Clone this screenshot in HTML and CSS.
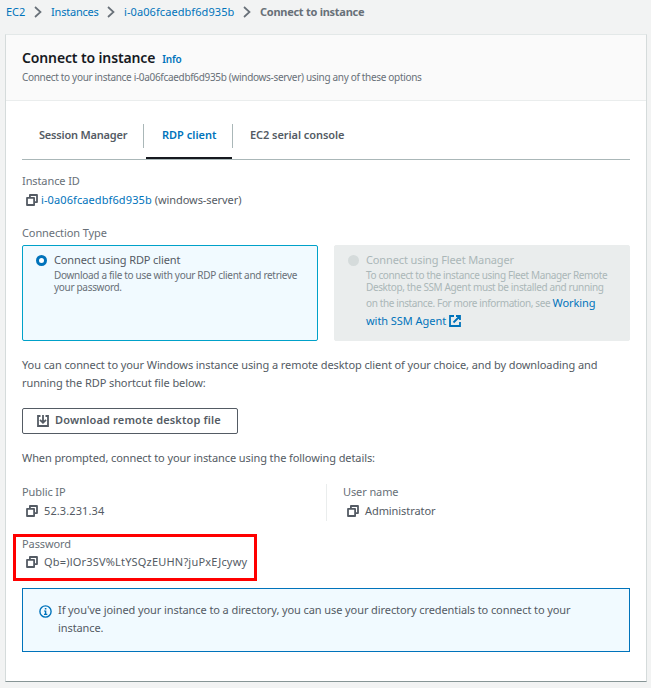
FILE: index.html
```
<!DOCTYPE html>
<html lang="en">
<head>
<meta charset="utf-8">
<title>Connect to instance</title>
<link rel="stylesheet" href="styles.css">
</head>
<body>
<svg class="defs" width="0" height="0">
  <symbol id="copy" viewBox="0 0 12 12"><path d="M3.900 3.500V1H11v7.100H8.500M1 3.900h7.100V11H1z" fill="none" stroke="currentColor" stroke-width="1.800" stroke-linejoin="round"/></symbol>
  <symbol id="chevron" viewBox="0 0 8 12"><path d="M1 1l5.5 5L1 11" fill="none" stroke="currentColor" stroke-width="1.7"/></symbol>
</svg>
<nav class="breadcrumbs">
  <a class="bc-ec2">EC2</a><svg class="chevron"><use href="#chevron"/></svg>
  <a class="bc-list">Instances</a><svg class="chevron"><use href="#chevron"/></svg>
  <a class="bc-id">i-0a06fcaedbf6d935b</a><svg class="chevron"><use href="#chevron"/></svg>
  <strong>Connect to instance</strong>
</nav>
<main class="card">
  <header class="card-header">
    <div class="title-row"><h1>Connect to instance</h1><a class="info">Info</a></div>
    <p class="subtitle">Connect to your instance i-0a06fcaedbf6d935b (windows-server) using any of these options</p>
  </header>
  <div class="content">
    <div class="tabs">
      <div class="tab tab-session"><span>Session Manager</span></div>
      <div class="tab tab-rdp active"><span>RDP client</span></div>
      <div class="tab tab-serial"><span>EC2 serial console</span></div>
    </div>
    <div class="label label-id">Instance ID</div>
    <div class="value value-id"><svg class="copy"><use href="#copy"/></svg><a>i-0a06fcaedbf6d935b</a><span>(windows-server)</span></div>
    <div class="label label-type">Connection Type</div>
    <div class="tiles">
      <div class="tile selected">
        <i class="radio"></i>
        <div><div class="tile-title">Connect using RDP client</div>
        <p class="tile-text">Download a file to use with your RDP client and retrieve<br>your password.</p></div>
      </div>
      <div class="tile disabled">
        <i class="radio"></i>
        <div><div class="tile-title">Connect using Fleet Manager</div>
        <p class="tile-text">To connect to the instance using Fleet Manager Remote<br>Desktop, the SSM Agent must be installed and running</p>
        <p class="tile-more">on the instance. For more information, see <a>Working</a><br><a>with SSM Agent <svg class="external" viewBox="0 0 12 12"><path d="M5 1H1v10h10V7M7 1h4v4M11 1L4.5 7.5" fill="none" stroke="currentColor" stroke-width="1.8"/></svg></a></p></div>
      </div>
    </div>
    <p class="intro">You can connect to your Windows instance using a remote desktop client of your choice, and by downloading and<br><span>running the RDP shortcut file below:</span></p>
    <button class="download"><svg viewBox="0 0 12 12"><path d="M3.5 1H1v10h10V1H8.500M6 0v7.500M3 4.800l3 3 3-3" fill="none" stroke="currentColor" stroke-width="1.8"/></svg><span>Download remote desktop file</span></button>
    <p class="prompt">When prompted, connect to your instance using the following details:</p>
    <div class="details">
      <div class="detail"><div class="label label-ip">Public IP</div><div class="value value-ip"><svg class="copy"><use href="#copy"/></svg><span>52.3.231.34</span></div></div>
      <div class="detail detail-user"><div class="label label-user">User name</div><div class="value value-user"><svg class="copy"><use href="#copy"/></svg><span>Administrator</span></div></div>
    </div>
    <div class="password"><div class="label label-pass">Password</div><div class="value value-pass"><svg class="copy"><use href="#copy"/></svg><span>Qb=)lOr3SV%LtYSQzEUHN?juPxEJcywy</span></div></div>
    <div class="alert">
      <svg viewBox="0 0 13 13"><circle cx="6.5" cy="6.5" r="5.6" fill="none" stroke="currentColor" stroke-width="1.4"/><path d="M5.8 3h1.6v1.4H5.8zM5 5.5h2.3v3.300H8.300V10H5V8.800h.9V6.600H5z" fill="currentColor"/></svg>
      <p>If you've joined your instance to a directory, you can use your directory credentials to connect to your<br>instance.</p>
    </div>
  </div>
</main>
</body>
</html>
```
FILE: styles.css
```
* { box-sizing: border-box; }
body { margin: 0; height: 688px; overflow: hidden; background: #f2f3f3; color: #545b64; font: 11px/18px "Noto Sans", sans-serif; }
h1, p { margin: 0; }
a { color: #0073bb; }
svg { display: block; flex: none; }
.defs { position: absolute; }
.breadcrumbs { display: flex; align-items: center; height: 34px; padding: 0 0 10px 6px; white-space: nowrap; color: #687078; }
.breadcrumbs a, .breadcrumbs strong { flex: none; }
.breadcrumbs .chevron { width: 8px; height: 12px; margin-right: 8px; color: #687078; }
.bc-ec2 { width: 28px; }
.bc-ec2 + .chevron { margin-right: 9px !important; }
.bc-list { width: 56px; letter-spacing: -0.2px; }
.bc-list + .chevron { margin-right: 9px !important; }
.bc-id { width: 119px; letter-spacing: 0.08px; }
.bc-id + .chevron { margin-right: 9px !important; }
.breadcrumbs strong { font-weight: 700; letter-spacing: -0.27px; }
.card { width: 642px; height: 648px; margin-left: 5px; background: #fff; border: 1px solid #d5dbdb; border-top-color: #e3e8e8; border-bottom-color: #879596; }
.card-header { height: 66px; padding: 13px 16px 0; background: #fafafa; border-bottom: 1px solid #eaeded; }
.title-row { display: flex; align-items: baseline; gap: 7px; height: 20px; white-space: nowrap; }
h1 { font-size: 14px; line-height: 20px; font-weight: 600; letter-spacing: -0.13px; color: #16191f; }
.info { font-size: 10px; font-weight: 600; letter-spacing: -0.2px; }
.subtitle { font-size: 10px; letter-spacing: -0.32px; color: #687078; white-space: nowrap; }
.content { padding: 0 16px; }
.tabs { display: flex; height: 59px; padding-top: 23px; border-bottom: 1px solid #aab7b8; font-weight: 600; }
.tab { height: 24px; line-height: 22px; white-space: nowrap; border-right: 1px solid #aab7b8; }
.tab-session { width: 122px; padding-left: 17px; letter-spacing: -0.2px; }
.tab-rdp { position: relative; width: 89px; padding-left: 18px; color: #0073bb; }
.tab-rdp::after { content: ""; position: absolute; left: 2px; right: 0; top: 33px; height: 2px; background: #16191f; }
.tab-serial { padding-left: 17px; border: 0; letter-spacing: -0.06px; }
.label { height: 18px; letter-spacing: -0.1px; color: #687078; white-space: nowrap; }
.label-id { margin-top: 12px; }
.value { display: flex; align-items: center; height: 20px; padding-left: 4px; white-space: nowrap; }
.copy { width: 12px; height: 12px; margin-right: 6px; }
.value-id .copy { margin-right: 3px; }
.value-id a { letter-spacing: 0.1px; }
.value-id span { margin-left: 3px; letter-spacing: -0.08px; }
.value-ip span { letter-spacing: 0.1px; }
.value-pass span { letter-spacing: 0.19px; }
.label-type { margin-top: 14px; }
.tiles { display: grid; grid-template-columns: 296px 296px; gap: 16px; margin-top: 3px; }
.tile { display: flex; height: 96px; padding: 6px 0 0 13px; border: 1px solid #00a1c9; border-radius: 2px; background: #f1faff; white-space: nowrap; }
.radio { flex: none; width: 11px; height: 11px; margin: 3px 7px 0 0; border: 3.5px solid #0073bb; border-radius: 50%; background: #fff; }
.tile-title { height: 17px; line-height: 16px; letter-spacing: -0.12px; }
.tile-text { font-size: 10px; line-height: 12px; letter-spacing: -0.31px; color: #687078; }
.disabled { border-color: #eaeded; background: #eaeded; }
.disabled .radio { border-color: #d5dbdb; background: #d5dbdb; }
.disabled .tile-title, .disabled p { color: #aab7b8; }
.disabled .tile-text { letter-spacing: -0.37px; }
.tile-more { margin-top: 1px; font-size: 10px; letter-spacing: -0.38px; }
.tile-more a { font-size: 11px; letter-spacing: -0.05px; }
.external { display: inline-block; width: 12px; height: 12px; vertical-align: -2px; }
.intro { margin-top: 15px; letter-spacing: -0.09px; white-space: nowrap; }
.download { display: flex; align-items: center; width: 216px; height: 26px; margin-top: 16px; padding: 0 0 0 14px; border: 1px solid #545b64; border-radius: 2px; background: #fff; color: #545b64; font: 600 11px/18px "Noto Sans", sans-serif; letter-spacing: 0.14px; white-space: nowrap; }
.download svg { width: 12px; height: 12px; margin-right: 6px; }
.download span { padding-bottom: 2px; }
.prompt { margin-top: 15px; letter-spacing: -0.09px; white-space: nowrap; }
.details { display: grid; grid-template-columns: 304px 1fr; height: 36px; margin-top: 17px; }
.detail .label { height: 17px; line-height: 16px; }
.detail-user { padding-left: 16px; border-left: 1px solid #eaeded; }
.value-user span { letter-spacing: -0.08px; }
.password { width: 244px; height: 47px; margin: 14px 0 0 -9px; padding: 0 0 0 6px; border: 3px solid #f00; }
.password .label { height: 15px; line-height: 14px; }
.alert { display: flex; height: 64px; margin-top: 7px; padding: 12px 0 0 16px; border: 1px solid #0073bb; background: #f1faff; letter-spacing: -0.09px; white-space: nowrap; }
.alert svg { width: 13px; height: 13px; margin: 4px 6px 0 0; color: #0073bb; }
```
